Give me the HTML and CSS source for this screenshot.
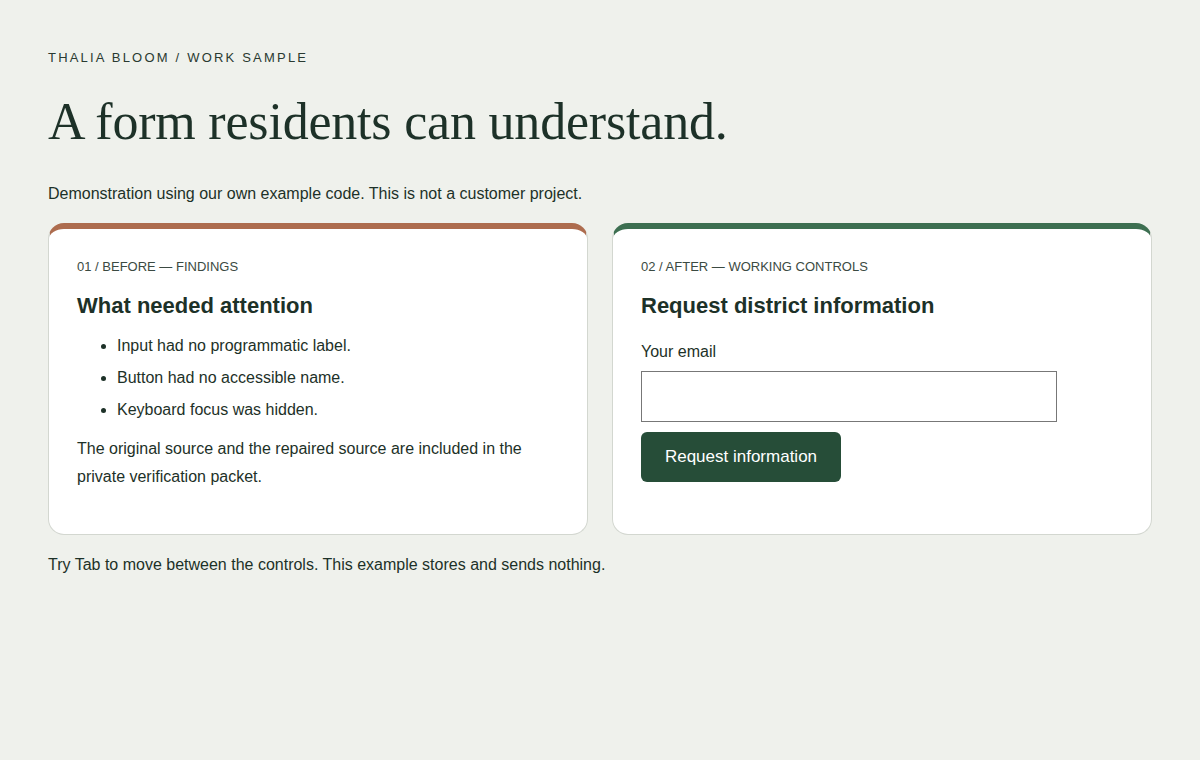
FILE: index.html
```html
<!DOCTYPE html>
<html lang="en">
<head>
	<meta charset="utf-8">
	<title>A form residents can understand</title>
	<link rel="stylesheet" href="styles.css">
</head>
<body>
	<main class="page">
		<p class="kicker">Thalia Bloom / Work sample</p>
		<h1 class="title">A form residents can understand.</h1>
		<p class="intro">Demonstration using our own example code. This is not a customer project.</p>
		<div class="cards">
			<section class="card card-before">
				<p class="eyebrow">01 / Before — Findings</p>
				<h2 class="card-title">What needed attention</h2>
				<ul class="findings">
					<li>Input had no programmatic label.</li>
					<li>Button had no accessible name.</li>
					<li>Keyboard focus was hidden.</li>
				</ul>
				<p class="note">The original source and the repaired source are included in the private verification packet.</p>
			</section>
			<section class="card card-after">
				<p class="eyebrow">02 / After — Working controls</p>
				<h2 class="card-title">Request district information</h2>
				<form class="form" onsubmit="return false;">
					<label class="label" for="email">Your email</label>
					<input class="input" id="email" type="email" autocomplete="email">
					<button class="btn" type="submit">Request information</button>
				</form>
			</section>
		</div>
		<p class="outro">Try Tab to move between the controls. This example stores and sends nothing.</p>
	</main>
</body>
</html>
```

FILE: styles.css
```css
*{margin:0;padding:0;box-sizing:border-box;}
body{background:#eff1ec;color:#1d3128;font-family:"Liberation Sans",Arial,sans-serif;font-size:16px;}
.page{padding:50px 48px 48px;}
.kicker{font-size:13px;letter-spacing:2.2px;text-transform:uppercase;line-height:16px;color:#2a3a31;}
.title{font-family:"Liberation Serif","Times New Roman",serif;font-weight:400;font-size:52px;line-height:60px;margin-top:26px;color:#1d3128;letter-spacing:-0.2px;}
.intro{margin-top:32px;line-height:20px;}
.cards{display:grid;grid-template-columns:1fr 1fr;gap:24px;margin-top:19px;}
.card{background:#fff;border:1px solid #d3d7d0;border-top:6px solid;border-radius:16px;padding:30px 28px 43px;}
.card-before{border-top-color:#ad6c4e;}
.card-after{border-top-color:#3d6f51;}
.eyebrow{font-size:13px;text-transform:uppercase;color:#3b4a42;line-height:16px;}
.card-title{font-size:22px;font-weight:700;line-height:28px;margin-top:17px;color:#1d3128;}
.findings{margin:16px 0 0 40px;line-height:20px;}
.findings li{margin-bottom:12px;}
.note{line-height:28px;margin-top:15px;}
.form{display:flex;flex-direction:column;align-items:flex-start;}
.label{margin-top:22px;line-height:20px;}
.input{margin-top:9px;width:416px;height:51px;border:1px solid #777;border-radius:0;background:#fff;font:inherit;padding:0 12px;}
.input:focus{outline:3px solid #3d6f51;outline-offset:2px;}
.btn{margin-top:10px;width:200px;height:50px;border:0;border-radius:6px;background:#264d38;color:#fff;font:inherit;font-size:17px;cursor:pointer;}
.btn:focus{outline:3px solid #ad6c4e;outline-offset:2px;}
.outro{margin-top:20px;line-height:20px;}
```
